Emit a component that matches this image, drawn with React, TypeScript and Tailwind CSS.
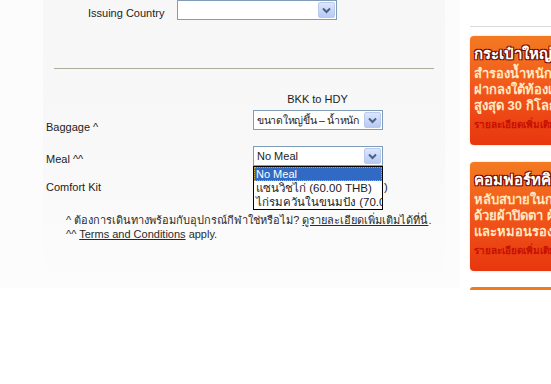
import React from "react"

const Arrow = () => (
    <div className="absolute right-[1px] top-[1px] bottom-[1px] w-[17px] rounded-[2px] border border-[#b9c9ef] bg-gradient-to-b from-[#dce6fd] to-[#b7c9f4] flex items-center justify-center">
        <svg width="9" height="7" viewBox="0 0 9 7">
            <path d="M1 1.5 L4.5 5 L8 1.5" fill="none" stroke="#4d6185" strokeWidth="2" />
        </svg>
    </div>
)

const Select = ({ text, className }: { text: string; className: string }) => (
    <div className={`relative h-[20px] border border-[#7f9db9] bg-white ${className}`}>
        <span className="absolute left-[3px] top-[2px] whitespace-nowrap leading-[14px]">{text}</span>
        <Arrow />
    </div>
)

const Banner = ({ title, lines }: { title: string; lines: string[] }) => (
    <div className="h-[109px] w-[100px] rounded-[4px] bg-gradient-to-b from-[#f47a22] via-[#f1541a] to-[#e8360e] pl-[4px] pt-[9px] overflow-hidden whitespace-nowrap shadow-[0_0_2px_#f7c9a0]">
        <p className="text-[15px] font-bold leading-[18px] text-white [text-shadow:1px_1px_0_#6b0a00,-1px_-1px_0_#6b0a00,1px_-1px_0_#6b0a00,-1px_1px_0_#6b0a00]">
            {title}
        </p>
        <div className="mt-[3px] text-[13px] font-bold leading-[16px] text-[#ffe9c2]">
            {lines.map((l) => (
                <p key={l}>{l}</p>
            ))}
        </div>
        <p className="mt-[5px] text-[10px] font-bold leading-[12px] text-[#c80f00]">รายละเอียดเพิ่มเติม</p>
    </div>
)

export default function App() {
    return (
        <div className="w-[551px] h-[384px] overflow-hidden bg-white flex font-['Liberation_Sans','Noto_Sans',sans-serif] text-[11px] text-[#1c1c1c]">
            {/* main column */}
            <div className="w-[460px] h-[288px] bg-[#fcfcfc] shrink-0">
                <div className="relative ml-[43px] w-[402px] h-[288px] bg-gradient-to-b from-[#f7f7f7] via-[#f8f8f8] to-[#fcfcfc]">
                    <div className="flex items-end h-[20px] pl-[45px]">
                        <span className="w-[89px] leading-[12px] pb-[1px]">Issuing Country</span>
                        <Select text="" className="w-[160px]" />
                    </div>

                    <div className="mt-[48px] ml-[11px] w-[380px] h-px bg-[#aeae9f]" />

                    <p className="mt-[24px] ml-[210px] w-[129px] text-center leading-[12px]">BKK to HDY</p>

                    <div className="mt-[5px] flex">
                        <span className="w-[210px] pl-[3px] pt-[11px] leading-[12px]">Baggage ^</span>
                        <Select text="ขนาดใหญ่ขึ้น – น้ำหนัก" className="w-[130px] overflow-hidden text-[10.5px] tracking-[-0.3px]" />
                    </div>

                    <div className="mt-[13px] flex">
                        <span className="w-[210px] pl-[3px] pt-[7px] leading-[12px]">Meal ^^</span>
                        <Select text="No Meal" className="w-[130px]" />
                    </div>

                    <div className="mt-[15px] flex">
                        <span className="w-[210px] pl-[3px] leading-[12px]">Comfort Kit</span>
                        <span className="ml-[131px] leading-[12px]">)</span>
                    </div>

                    <div className="mt-[20px] pl-[23px] leading-[14px] text-[#2a2a2a]">
                        <p>
                            ^ ต้องการเดินทางพร้อมกับอุปกรณ์กีฬาใช่หรือไม่?{" "}
                            <span className="underline">ดูรายละเอียดเพิ่มเติมได้ที่นี่</span>.
                        </p>
                        <p>
                            ^^ <span className="underline">Terms and Conditions</span> apply.
                        </p>
                    </div>

                    {/* open dropdown list */}
                    <div className="absolute left-[210px] top-[166px] w-[130px] border border-black bg-white leading-[14px] whitespace-nowrap overflow-hidden">
                        <p className="bg-[#316ac5] text-white pl-[2px] outline-1 outline-dotted outline-[#c9a84a] -outline-offset-1">No Meal</p>
                        <p className="pl-[2px] text-[11.5px]">แซนวิชไก่ (60.00 THB)</p>
                        <p className="pl-[2px] text-[11.5px]">ไก่รมควันในขนมปัง (70.00 THB)</p>
                    </div>
                </div>
            </div>

            {/* right column */}
            <div className="pl-[10px] flex-1">
                <div className="mt-[26px] h-px bg-[#dcdcdc]" />
                <div className="mt-[9px]">
                    <Banner title="กระเป๋าใหญ่ สบายใจ" lines={["สำรองน้ำหนักสัมภาระ", "ฝากลงใต้ท้องเครื่อง", "สูงสุด 30 กิโลกรัม"]} />
                </div>
                <div className="mt-[17px]">
                    <Banner title="คอมฟอร์ทคิท" lines={["หลับสบายในการเดินทาง", "ด้วยผ้าปิดตา ผ้าห่ม", "และหมอนรองคอ"]} />
                </div>
                <div className="mt-[16px] h-[3px] rounded-t-[3px] bg-[#f07a1e]" />
            </div>
        </div>
    )
}
